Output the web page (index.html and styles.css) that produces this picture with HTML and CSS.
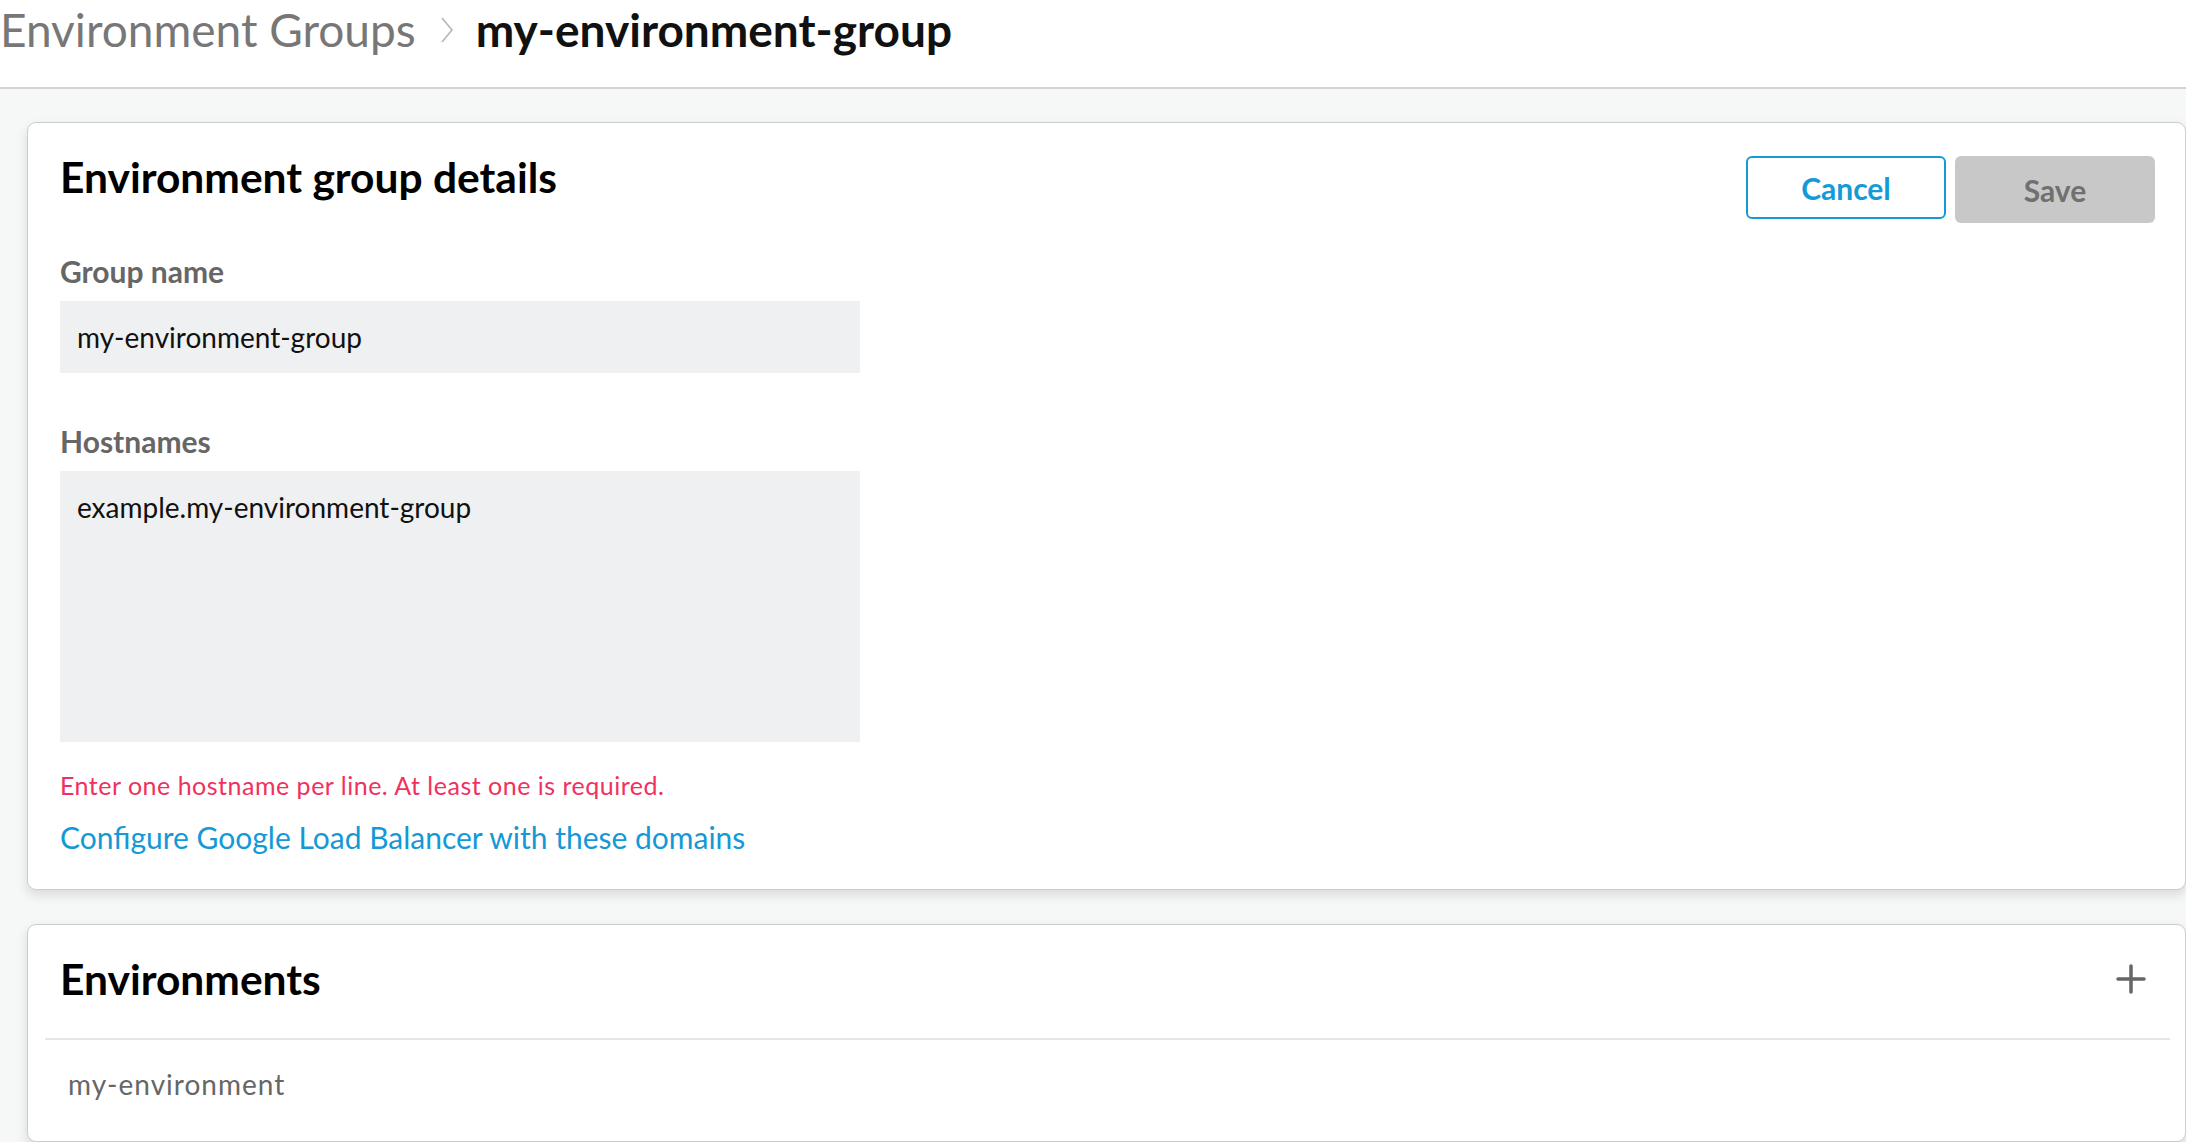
FILE: index.html
```html
<!DOCTYPE html>
<html lang="en">
<head>
  <meta charset="UTF-8">
  <meta name="viewport" content="width=device-width, initial-scale=1.0">
  <title>my-environment-group</title>
  <link rel="stylesheet" href="styles.css">
</head>
<body>

<div class="topbar">
  <div class="breadcrumb">
    <a class="crumb-parent" href="#">Environment Groups</a>
    <svg class="crumb-sep" width="14" height="28" viewBox="0 0 14 28">
      <polyline points="2,2 12,14 2,26" fill="none" stroke="#b5b5b5" stroke-width="1.6"/>
    </svg>
    <span class="crumb-current">my-environment-group</span>
  </div>
</div>

<div class="page">

  <div class="card details-card">
    <div class="card-head">
      <h2>Environment group details</h2>
      <div class="actions">
        <button class="btn btn-outline">Cancel</button>
        <button class="btn btn-disabled" disabled>Save</button>
      </div>
    </div>

    <label class="field-label" for="groupName">Group name</label>
    <input id="groupName" class="input-field" type="text" value="my-environment-group">

    <label class="field-label hostnames-label" for="hostnames">Hostnames</label>
    <textarea id="hostnames" class="input-field textarea-field">example.my-environment-group</textarea>

    <p class="hint-error">Enter one hostname per line. At least one is required.</p>
    <a class="link" href="#">Configure Google Load Balancer with these domains</a>
  </div>

  <div class="card env-card">
    <div class="env-head">
      <h2>Environments</h2>
      <button class="icon-btn" title="Add environment">
        <svg width="30" height="30" viewBox="0 0 30 30">
          <path d="M15 2 V28 M2 15 H28" stroke="#666" stroke-width="3.5" stroke-linecap="round"/>
        </svg>
      </button>
    </div>
    <ul class="env-list">
      <li>my-environment</li>
    </ul>
  </div>

</div>

</body>
</html>
```

FILE: styles.css
```css
body {
  font-family: Lato, "Open Sans", sans-serif;
  background-color: #f6f7f7;
  margin: 0;
  padding: 0;
  color: #000;
}

/* top bar with breadcrumb */
.topbar {
  background: #fff;
  height: 87px;
  border-bottom: 2px solid #d3d3d3;
}

.breadcrumb {
  display: flex;
  align-items: center;
  height: 54px;
  padding-top: 3px;
  font-size: 46px;
  line-height: 54px;
}

.crumb-parent {
  color: #777;
  font-weight: normal;
  text-decoration: none;
}

.crumb-sep {
  margin: 0 22px 0 24px;
}

.crumb-current {
  font-weight: bold;
  color: #111;
}

.page {
  padding: 33px 0 0 27px;
}

.card {
  background: #fff;
  border: 1px solid #cdcdcd;
  border-radius: 9px;
  box-shadow: 0 5px 12px rgba(0, 0, 0, 0.12);
}

h2 {
  margin: 0;
  font-size: 42.5px;
  line-height: 48px;
  font-weight: bold;
  color: #000;
}

.details-card {
  padding: 30px 30px 34px 32px;
}

.card-head {
  display: flex;
  justify-content: space-between;
  align-items: flex-start;
}

.actions {
  display: flex;
  align-items: flex-start;
  gap: 9px;
  margin-top: 3px;
}

.btn {
  font-family: Lato, "Open Sans", sans-serif;
  font-size: 30px;
  font-weight: bold;
  width: 200px;
  border-radius: 6px;
  cursor: pointer;
}

.btn-outline {
  height: 63px;
  background: #fff;
  color: #149bd7;
  border: 2px solid #149bd7;
}

.btn-disabled {
  height: 67px;
  background: #c8c8c8;
  color: #707070;
  border: none;
  cursor: not-allowed;
}

.field-label {
  display: block;
  margin-top: 31px;
  font-size: 30px;
  line-height: 34px;
  font-weight: bold;
  color: #666;
}

.hostnames-label {
  margin-top: 51px;
}

.input-field {
  display: block;
  box-sizing: border-box;
  width: 800px;
  margin-top: 13px;
  padding: 0 17px;
  height: 72px;
  border: none;
  background: #eff0f2;
  font-family: Lato, "Open Sans", sans-serif;
  font-size: 28px;
  color: #111;
  outline: none;
}

.textarea-field {
  height: 271px;
  padding: 19px 17px;
  line-height: 34px;
  resize: none;
}

.hint-error {
  margin: 28px 0 0;
  font-size: 25px;
  line-height: 30px;
  color: #f0315e;
  letter-spacing: 0.5px;
}

.link {
  display: inline-block;
  margin-top: 19px;
  font-size: 30px;
  line-height: 36px;
  color: #1399d6;
  text-decoration: none;
}

.env-card {
  margin-top: 34px;
  padding: 0 15px 40px 17px;
}

.env-head {
  display: flex;
  justify-content: space-between;
  align-items: center;
  padding: 30px 24px 35px 15px;
  border-bottom: 2px solid #e6e6e6;
}

.icon-btn {
  background: none;
  border: none;
  padding: 0;
  cursor: pointer;
  display: flex;
}

.env-list {
  list-style: none;
  margin: 0;
  padding: 27px 0 0 23px;
  font-size: 28px;
  line-height: 34px;
  color: #666;
  letter-spacing: 1px;
}
```
